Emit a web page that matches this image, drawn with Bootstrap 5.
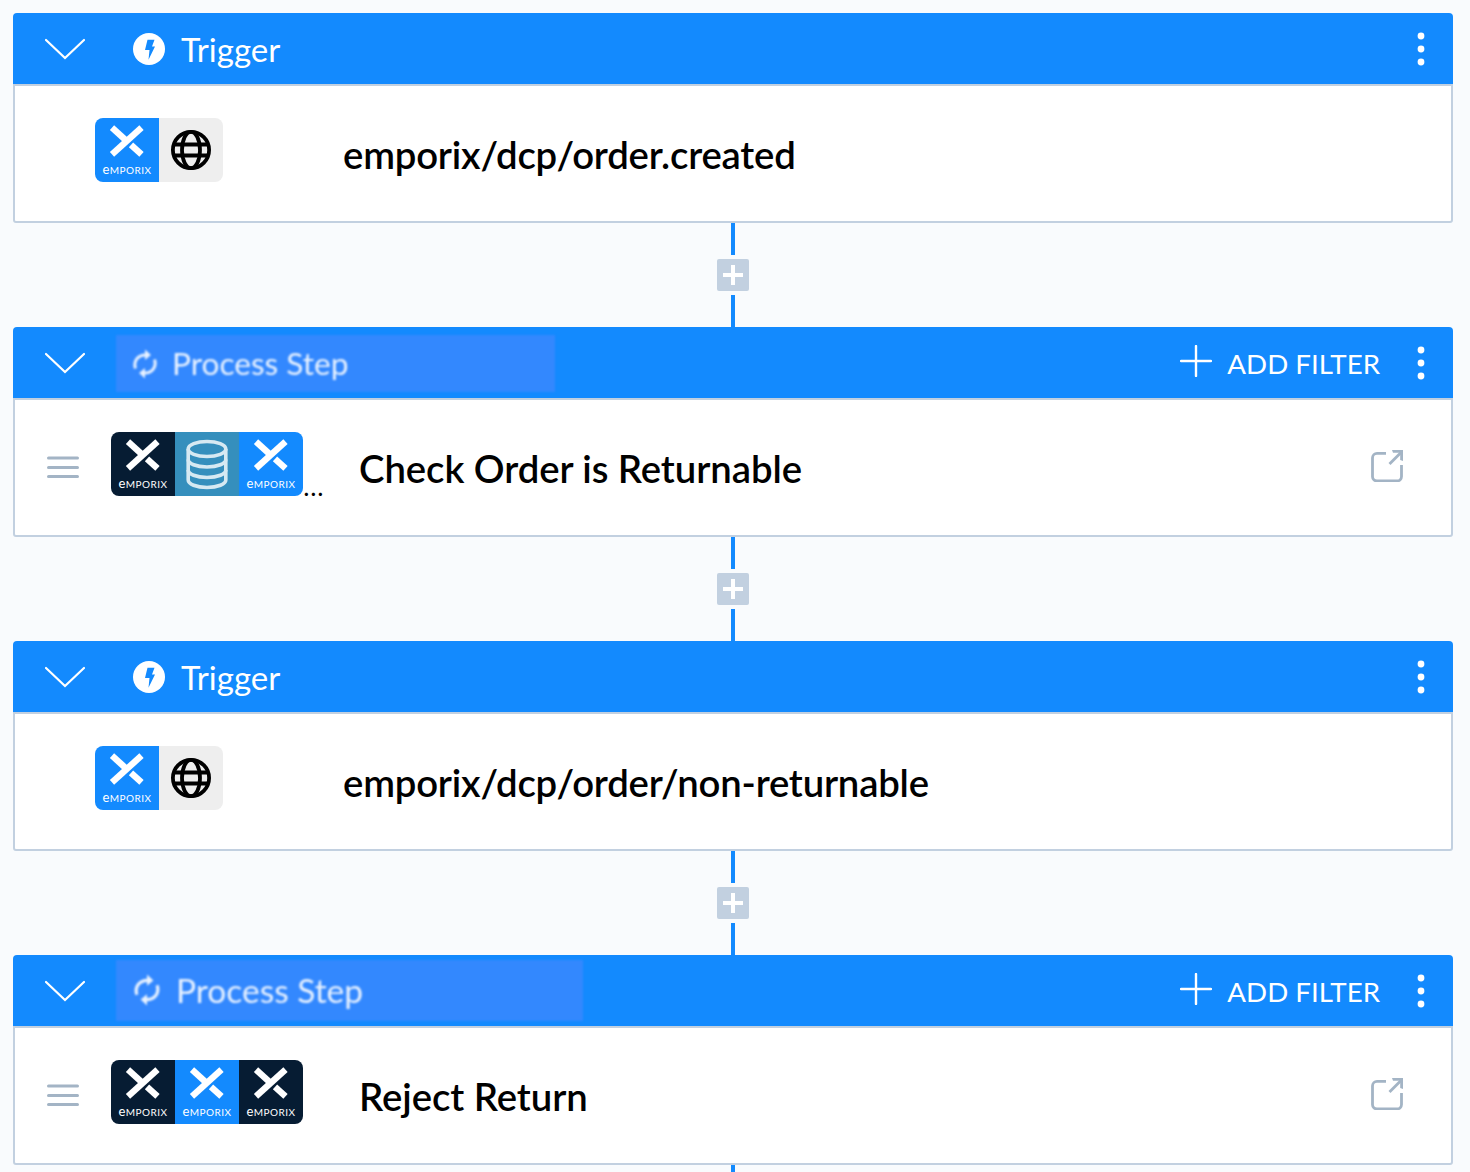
<!DOCTYPE html>
<html lang="en">
<head>
    <meta charset='utf-8'>
    <title>Process flow</title>
    <meta name='viewport' content='width=device-width, initial-scale=1'>
    <link href="https://cdn.jsdelivr.net/npm/bootstrap@5.3.5/dist/css/bootstrap.min.css" rel="stylesheet">
    <style>
        html, body { height: 1172px; overflow: hidden; }
        body {
            background: #f9fbfd;
            padding: 13px 17px 0 13px;
            font-family: Lato, sans-serif;
        }
        .step-card {
            border: 0;
            border-radius: 4px;
            --bs-card-bg: transparent;
        }
        .step-head {
            height: 71px;
            padding: 0 28px 0 32px;
            background: #138afe;
            color: #fff;
            border: 0;
            border-radius: 4px 4px 0 0 !important;
        }
        .step-chevron { width: 40px; height: 22px; flex: none; }
        .step-label { font-size: 33px; line-height: 40px; margin-left: 16px; }
        .step-label-icon { width: 32px; height: 32px; flex: none; margin-left: 48px; }
        .drag-chip {
            background: #3388fe;
            height: 57px;
            width: 439px;
            margin-left: 31px;
            padding-left: 16px;
            margin-top: 2px;
            filter: blur(.8px);
            color: #e8f2ff;
            flex: none;
        }
        .drag-chip .step-label { font-size: 31.600px; margin-left: 14px; margin-top: -2px; }
        .drag-chip svg { width: 26px; height: 30px; flex: none; }
        .drag-chip-wide { width: 467px; height: 61px; margin-top: -1px; }
        .drag-chip-wide .step-label { font-size: 33.500px; margin-left: 15px; margin-top: 0; }
        .drag-chip-wide svg { width: 28px; height: 32px; margin-left: 1px; }
        .add-filter { font-size: 27.700px; line-height: 36px; margin: 3px 37px 0 0; }
        .add-filter svg { width: 32px; height: 32px; margin-right: 15px; margin-top: -6px; }
        .kebab { width: 8px; height: 36px; flex: none; margin-top: 3px; }
        .step-body {
            height: 139px;
            padding: 0;
            background: #fff;
            border: 2px solid #c2d0e0;
            border-radius: 0 0 3px 3px;
        }
        .step-title {
            font-weight: 600;
            font-size: 38.300px;
            line-height: 44px;
            letter-spacing: -.06px;
            color: #000;
        }
        .slot-drag { width: 32px; height: 24px; flex: none; margin: -1px 32px 0 32px; }
        .slot-empty { width: 80px; flex: none; }
        .logo-slot { width: 248px; flex: none; height: 64px; margin-top: -7px; }
        .logo-row { border-radius: 8px; overflow: hidden; }
        .logo-tile { width: 64px; height: 64px; flex: none; display: block; }
        .tile-navy { background: #061c33; }
        .tile-blue { background: #138afe; }
        .tile-web { background: #eeeeee; }
        .tile-db { background: #358fbd; }
        .tile-x { width: 64px; height: 45px; display: block; }
        .tile-name { display: block; height: 12px; font-size: 10px; line-height: 12px; letter-spacing: .5px; color: #fff; text-align: center; white-space: nowrap; }
        .tile-name i { font-style: normal; font-size: 13px; }
        .more-dots { font-size: 20px; line-height: 16px; font-weight: 900; color: #000; margin-left: 1px; letter-spacing: 2.200px; }
        .open-icon { width: 32px; height: 32px; flex: none; margin: -4px 48px 0 auto; }
        .link-gap { height: 104px; }
        .link-end { height: 7px; }
        .link-line { width: 4px; flex: 1; background: #138afe; }
        .link-plus {
            width: 32px;
            height: 32px;
            margin: 4px 0;
            background: #c2d0e0;
            border-radius: 2px;
        }
        .link-plus svg { width: 20px; height: 20px; }
        .title-path { letter-spacing: -.2px; }
    </style>
</head>
<body>
    <svg width="0" height="0" class="d-block position-absolute">
        <symbol id="i-x" viewBox="0 0 64 45">
            <g fill="none" stroke="#fff" stroke-width="6.400">
                <path d="M46.500 9.700 17 36.300"/>
                <path d="M17 9.700 31.500 22.800"/>
                <path d="M36 26.800 46.500 36.300"/>
            </g>
        </symbol>
        <symbol id="i-globe" viewBox="0 0 64 64">
            <g fill="none" stroke="#000" stroke-width="3.800">
                <circle cx="32" cy="32" r="18.100"/>
                <ellipse cx="32" cy="32" rx="9" ry="18.100"/>
                <path d="M15 26.500h34M15 37.500h34"/>
            </g>
        </symbol>
        <symbol id="i-db" viewBox="0 0 64 64">
            <g fill="none" stroke="#d6e9f2" stroke-width="3.600">
                <ellipse cx="32" cy="17" rx="18.800" ry="7.500"/>
                <path d="M13.200 17v31c0 4 8 7.500 18.800 7.500S50.800 52 50.800 48V17"/>
                <path d="M13.200 27.500c0 4 8 7.500 18.800 7.500s18.800-3.500 18.800-7.500"/>
                <path d="M13.200 38c0 4 8 7.500 18.800 7.500S50.800 42 50.800 38"/>
            </g>
        </symbol>
        <symbol id="i-sync" viewBox="0 0 26 30">
            <g fill="none" stroke="currentColor" stroke-width="3">
                <path d="M3.500 19.500C1 12 6 6 13.500 6"/>
                <path d="M22.500 10.500C25 18 20 24 12.500 24"/>
            </g>
            <path fill="currentColor" d="M13 0.500l6 5.500-6 5zM13 19l-6 5 6 5.500z"/>
        </symbol>
        <symbol id="i-bolt" viewBox="0 0 32 32">
            <circle cx="16" cy="16" r="16" fill="#fff"/>
            <path fill="#138afe" d="M14.500 6.700H21.500L19 13.500H22L15.500 26.700 16.500 17H12z"/>
        </symbol>
        <symbol id="i-chevron" viewBox="0 0 40 22">
            <path fill="none" stroke="#fff" stroke-width="2.200" stroke-linecap="round" d="M1 2l19 18L39 2"/>
        </symbol>
        <symbol id="i-kebab" viewBox="0 0 8 36">
            <circle cx="4" cy="4" r="3.400" fill="#fff"/>
            <circle cx="4" cy="17" r="3.400" fill="#fff"/>
            <circle cx="4" cy="30" r="3.400" fill="#fff"/>
        </symbol>
        <symbol id="i-plus" viewBox="0 0 32 32">
            <path fill="none" stroke="#fff" stroke-width="2.400" stroke-linecap="round" d="M16 1v30M1 16h30"/>
        </symbol>
        <symbol id="i-drag" viewBox="0 0 32 24">
            <path fill="none" stroke="#a3b4c5" stroke-width="3" stroke-linecap="round" d="M1.500 3h29M1.500 12.500h29M1.500 21.500h29"/>
        </symbol>
        <symbol id="i-open" viewBox="0 0 32 32">
            <g fill="none" stroke="#a3b4c5" stroke-width="2.800">
                <path d="M15 3.400H6a4.500 4.500 0 0 0-4.500 4.500v18.700A4.500 4.500 0 0 0 6 31h20a4.500 4.500 0 0 0 4.500-4.500V15"/>
                <path d="M18.500 14 30 2.500"/>
            </g>
            <path fill="#a3b4c5" d="M21 0h11v11l-2.800-1V2.800H22z"/>
        </symbol>
    </svg>

    <div id="flow"></div>

    <script>
        const emporix = color => `
            <div class="logo-tile tile-${color}">
                <svg class="tile-x"><use href="#i-x"/></svg>
                <span class="tile-name"><i>e</i>MPORIX</span>
            </div>`;

        const tiles = {
            navy: emporix('navy'),
            blue: emporix('blue'),
            web: '<svg class="logo-tile tile-web"><use href="#i-globe"/></svg>',
            db: '<svg class="logo-tile tile-db"><use href="#i-db"/></svg>'
        };

        const steps = [
            { kind: 'trigger', title: 'emporix/dcp/order.created', logos: ['blue', 'web'] },
            { kind: 'process', title: 'Check Order is Returnable', logos: ['navy', 'db', 'blue'], more: true },
            { kind: 'trigger', title: 'emporix/dcp/order/non-returnable', logos: ['blue', 'web'] },
            { kind: 'process', title: 'Reject Return', logos: ['navy', 'blue', 'navy'], wide: true }
        ];

        const connector = `
            <div class="link-gap d-flex flex-column align-items-center">
                <div class="link-line"></div>
                <div class="link-plus d-flex align-items-center justify-content-center">
                    <svg viewBox="0 0 20 20"><path d="M10 0v20M0 10h20" stroke="#fff" stroke-width="4"/></svg>
                </div>
                <div class="link-line"></div>
            </div>`;
        const connectorEnd = '<div class="link-end d-flex flex-column align-items-center"><div class="link-line"></div></div>';

        function stepHTML(s) {
            const isProcess = s.kind === 'process';
            const label = isProcess ? `
                <div class="drag-chip ${s.wide ? 'drag-chip-wide' : ''} d-flex align-items-center">
                    <svg><use href="#i-sync"/></svg>
                    <span class="step-label">Process Step</span>
                </div>
                <div class="add-filter ms-auto d-flex align-items-center">
                    <svg><use href="#i-plus"/></svg>
                    <span>ADD FILTER</span>
                </div>` : `
                <svg class="step-label-icon"><use href="#i-bolt"/></svg>
                <span class="step-label">Trigger</span>
                <span class="ms-auto"></span>`;
            return `
            <div class="card step-card">
                <div class="card-header step-head d-flex align-items-center">
                    <svg class="step-chevron"><use href="#i-chevron"/></svg>
                    ${label}
                    <svg class="kebab"><use href="#i-kebab"/></svg>
                </div>
                <div class="card-body step-body d-flex align-items-center">
                    ${isProcess ? '<svg class="slot-drag"><use href="#i-drag"/></svg>' : '<div class="slot-empty"></div>'}
                    <div class="logo-slot d-flex align-items-end">
                        <div class="logo-row d-flex">${s.logos.map(l => tiles[l]).join('')}</div>
                        ${s.more ? '<span class="more-dots">...</span>' : ''}
                    </div>
                    <div class="step-title ${isProcess ? '' : 'title-path'}">${s.title}</div>
                    ${isProcess ? '<svg class="open-icon"><use href="#i-open"/></svg>' : ''}
                </div>
            </div>`;
        }

        document.getElementById('flow').innerHTML =
            steps.map((s, i) => stepHTML(s) + (i < steps.length - 1 ? connector : connectorEnd)).join('');
    </script>

    <script src="https://cdn.jsdelivr.net/npm/bootstrap@5.3.5/dist/js/bootstrap.bundle.min.js"></script>
</body>
</html>
